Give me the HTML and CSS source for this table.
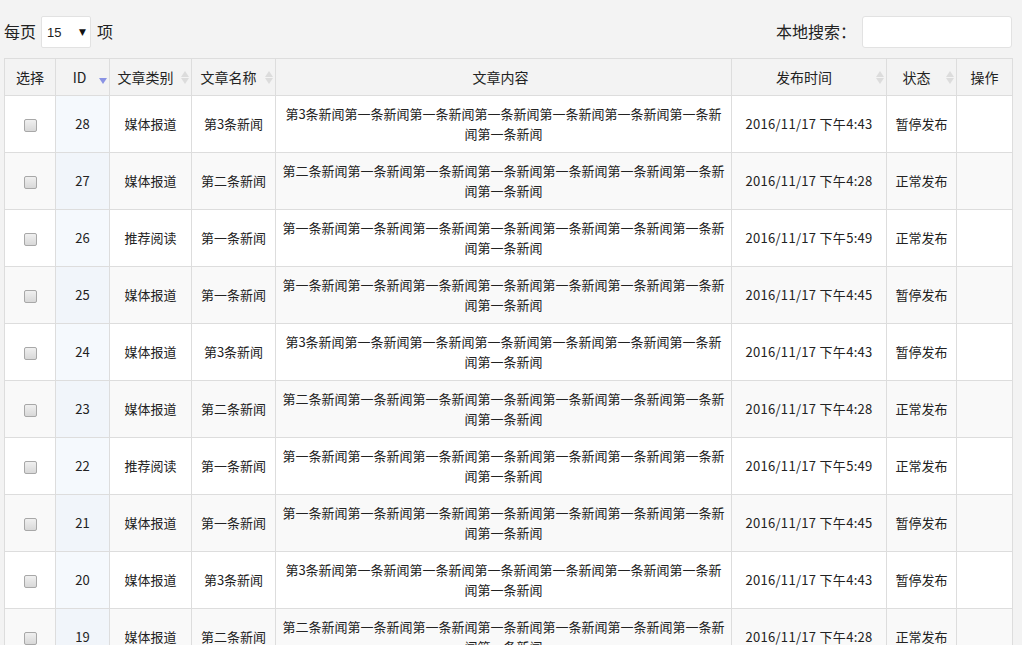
FILE: index.html
```html
<!DOCTYPE html>
<html lang="zh-CN">
<head>
<meta charset="utf-8">
<title>文章列表</title>
<link rel="stylesheet" href="styles.css">
</head>
<body>
<div class="page">
  <div class="toolbar">
    <label class="length">每页
      <span class="select-wrap">
        <select class="select"><option>15</option><option>30</option></select>
        <span class="select-arrow">▼</span>
      </span>
    项</label>
    <label class="search">本地搜索：<input class="search-input" type="text"></label>
  </div>
  <table class="grid">
    <colgroup>
      <col class="c1"><col class="c2"><col class="c3"><col class="c4"><col class="c5"><col class="c6"><col class="c7"><col class="c8">
    </colgroup>
    <thead>
      <tr>
        <th>选择</th>
        <th class="sort-desc">ID</th>
        <th class="sortable">文章类别</th>
        <th class="sortable">文章名称</th>
        <th class="wide">文章内容</th>
        <th class="sortable">发布时间</th>
        <th class="sortable">状态</th>
        <th>操作</th>
      </tr>
    </thead>
    <tbody>
      <tr><td><input class="chk" type="checkbox"></td><td class="idc">28</td><td>媒体报道</td><td>第3条新闻</td><td class="content">第3条新闻第一条新闻第一条新闻第一条新闻第一条新闻第一条新闻第一条新闻第一条新闻</td><td class="date">2016/11/17 下午4:43</td><td>暂停发布</td><td></td></tr>
      <tr><td><input class="chk" type="checkbox"></td><td class="idc">27</td><td>媒体报道</td><td>第二条新闻</td><td class="content">第二条新闻第一条新闻第一条新闻第一条新闻第一条新闻第一条新闻第一条新闻第一条新闻</td><td class="date">2016/11/17 下午4:28</td><td>正常发布</td><td></td></tr>
      <tr><td><input class="chk" type="checkbox"></td><td class="idc">26</td><td>推荐阅读</td><td>第一条新闻</td><td class="content">第一条新闻第一条新闻第一条新闻第一条新闻第一条新闻第一条新闻第一条新闻第一条新闻</td><td class="date">2016/11/17 下午5:49</td><td>正常发布</td><td></td></tr>
      <tr><td><input class="chk" type="checkbox"></td><td class="idc">25</td><td>媒体报道</td><td>第一条新闻</td><td class="content">第一条新闻第一条新闻第一条新闻第一条新闻第一条新闻第一条新闻第一条新闻第一条新闻</td><td class="date">2016/11/17 下午4:45</td><td>暂停发布</td><td></td></tr>
      <tr><td><input class="chk" type="checkbox"></td><td class="idc">24</td><td>媒体报道</td><td>第3条新闻</td><td class="content">第3条新闻第一条新闻第一条新闻第一条新闻第一条新闻第一条新闻第一条新闻第一条新闻</td><td class="date">2016/11/17 下午4:43</td><td>暂停发布</td><td></td></tr>
      <tr><td><input class="chk" type="checkbox"></td><td class="idc">23</td><td>媒体报道</td><td>第二条新闻</td><td class="content">第二条新闻第一条新闻第一条新闻第一条新闻第一条新闻第一条新闻第一条新闻第一条新闻</td><td class="date">2016/11/17 下午4:28</td><td>正常发布</td><td></td></tr>
      <tr><td><input class="chk" type="checkbox"></td><td class="idc">22</td><td>推荐阅读</td><td>第一条新闻</td><td class="content">第一条新闻第一条新闻第一条新闻第一条新闻第一条新闻第一条新闻第一条新闻第一条新闻</td><td class="date">2016/11/17 下午5:49</td><td>正常发布</td><td></td></tr>
      <tr><td><input class="chk" type="checkbox"></td><td class="idc">21</td><td>媒体报道</td><td>第一条新闻</td><td class="content">第一条新闻第一条新闻第一条新闻第一条新闻第一条新闻第一条新闻第一条新闻第一条新闻</td><td class="date">2016/11/17 下午4:45</td><td>暂停发布</td><td></td></tr>
      <tr><td><input class="chk" type="checkbox"></td><td class="idc">20</td><td>媒体报道</td><td>第3条新闻</td><td class="content">第3条新闻第一条新闻第一条新闻第一条新闻第一条新闻第一条新闻第一条新闻第一条新闻</td><td class="date">2016/11/17 下午4:43</td><td>暂停发布</td><td></td></tr>
      <tr><td><input class="chk" type="checkbox"></td><td class="idc">19</td><td>媒体报道</td><td>第二条新闻</td><td class="content">第二条新闻第一条新闻第一条新闻第一条新闻第一条新闻第一条新闻第一条新闻第一条新闻</td><td class="date">2016/11/17 下午4:28</td><td>正常发布</td><td></td></tr>
      <tr><td><input class="chk" type="checkbox"></td><td class="idc">18</td><td>推荐阅读</td><td>第一条新闻</td><td class="content">第一条新闻第一条新闻第一条新闻第一条新闻第一条新闻第一条新闻第一条新闻第一条新闻</td><td class="date">2016/11/17 下午5:49</td><td>正常发布</td><td></td></tr>
      <tr><td><input class="chk" type="checkbox"></td><td class="idc">17</td><td>媒体报道</td><td>第一条新闻</td><td class="content">第一条新闻第一条新闻第一条新闻第一条新闻第一条新闻第一条新闻第一条新闻第一条新闻</td><td class="date">2016/11/17 下午4:45</td><td>暂停发布</td><td></td></tr>
    </tbody>
  </table>
</div>
</body>
</html>
```
FILE: styles.css
```css
html, body {
  margin: 0;
  padding: 0;
  background: #f3f3f3;
}
body {
  font-family: "Microsoft YaHei", "Noto Sans CJK SC", sans-serif;
  color: #333;
}
.page {
  padding: 16px 10px 0 4px;
}
.toolbar {
  display: flex;
  justify-content: space-between;
  align-items: center;
  height: 32px;
  margin-bottom: 10px;
}
.length, .search {
  display: flex;
  align-items: center;
  font-size: 16px;
  line-height: 20px;
  color: #222;
  position: relative;
  top: -1px;
}
.select-wrap {
  position: relative;
  display: inline-block;
  margin: 0 6px 0 5px;
  top: 1px;
}
.select {
  appearance: none;
  -webkit-appearance: none;
  display: block;
  width: 50px;
  height: 32px;
  border: 1px solid #e2e2e2;
  border-radius: 2px;
  background: #fff;
  font-family: "Liberation Sans", Arial, sans-serif;
  font-size: 13px;
  color: #222;
  padding: 0 0 0 5px;
  margin: 0;
  outline: none;
}
.select-arrow {
  position: absolute;
  right: 5px;
  top: 10px;
  font-size: 9px;
  line-height: 12px;
  color: #111;
  pointer-events: none;
  font-family: "DejaVu Sans", sans-serif;
}
.search-input {
  width: 150px;
  height: 32px;
  box-sizing: border-box;
  border: 1px solid #e2e2e2;
  border-radius: 3px;
  background: #fff;
  margin: 0 0 0 6px;
  padding: 0 6px;
  outline: none;
  position: relative;
  top: 1px;
}
.grid {
  width: 1008px;
  border-collapse: collapse;
  table-layout: fixed;
  background: #fff;
}
.c1 { width: 51px; }
.c2 { width: 54px; }
.c3 { width: 82px; }
.c4 { width: 84px; }
.c5 { width: 456px; }
.c6 { width: 155px; }
.c7 { width: 70px; }
.c8 { width: 56px; }
.grid th, .grid td {
  border: 1px solid #dddddd;
  text-align: center;
  vertical-align: middle;
  line-height: 20px;
  padding: 8px 6px;
}
.grid th {
  background: #f3f3f3;
  font-size: 14px;
  font-weight: normal;
  color: #222;
  position: relative;
}
.grid th.sortable, .grid th.sort-desc {
  padding-right: 16px;
}
.grid th.sort-desc {
  padding-left: 10px;
}
.grid th.wide {
  padding-right: 12px;
}
.grid th.sortable::before,
.grid th.sortable::after,
.grid th.sort-desc::after {
  content: "";
  position: absolute;
  right: 2px;
  width: 0;
  height: 0;
  border-left: 4.5px solid transparent;
  border-right: 4.5px solid transparent;
}
.grid th.sortable::before {
  top: 12px;
  border-bottom: 6px solid #dcdcdc;
}
.grid th.sortable::after {
  top: 19px;
  border-top: 6px solid #dcdcdc;
}
.grid th.sort-desc::after {
  top: 19px;
  border-top: 6px solid #8a93e4;
}
.grid td {
  font-size: 13px;
  color: #222;
  height: 40px;
}
.grid td.date {
  letter-spacing: 0.3px;
}
.grid tbody tr:nth-child(even) td {
  background: #f9f9f9;
}
.grid td.idc {
  background: #f5f9fd;
}
.grid tbody tr:nth-child(even) td.idc {
  background: #f1f5fa;
}
.chk {
  appearance: none;
  -webkit-appearance: none;
  width: 13px;
  height: 13px;
  margin: 0;
  border: 1px solid #a8a8a8;
  border-radius: 2px;
  background: linear-gradient(#f0f0f0, #d8d8d8);
  vertical-align: middle;
  display: inline-block;
}
```
